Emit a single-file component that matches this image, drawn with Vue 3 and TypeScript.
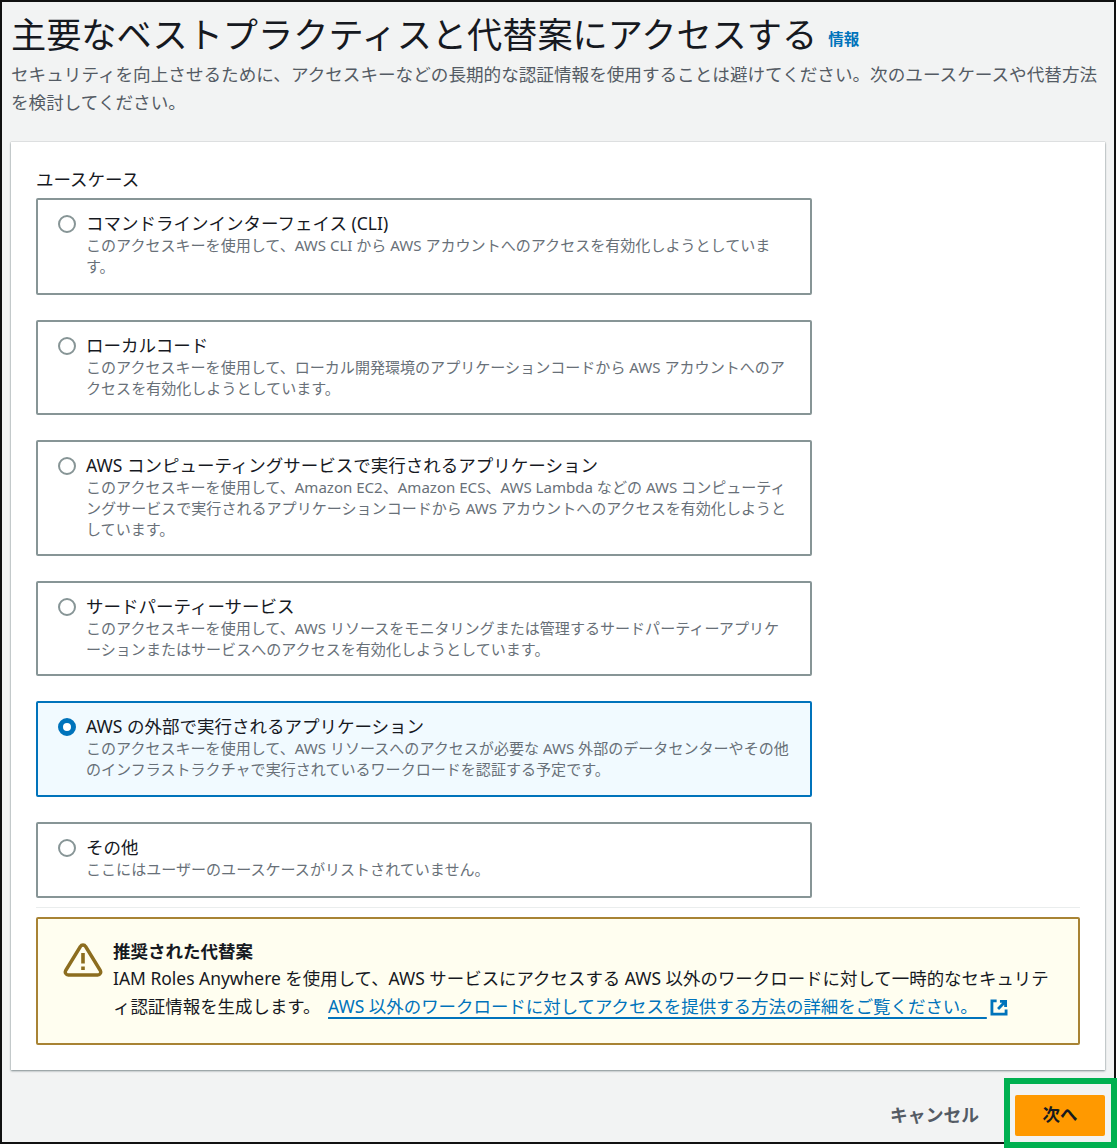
<script setup lang="ts">
interface UseCase {
  title: string
  desc: string
  selected?: boolean
  height: number
}
const useCases: UseCase[] = [
  { title: 'コマンドラインインターフェイス (CLI)', desc: 'このアクセスキーを使用して、AWS CLI から AWS アカウントへのアクセスを有効化しようとしています。', height: 97 },
  { title: 'ローカルコード', desc: 'このアクセスキーを使用して、ローカル開発環境のアプリケーションコードから AWS アカウントへのアクセスを有効化しようとしています。', height: 95 },
  { title: 'AWS コンピューティングサービスで実行されるアプリケーション', desc: 'このアクセスキーを使用して、Amazon EC2、Amazon ECS、AWS Lambda などの AWS コンピューティングサービスで実行されるアプリケーションコードから AWS アカウントへのアクセスを有効化しようとしています。', height: 116 },
  { title: 'サードパーティーサービス', desc: 'このアクセスキーを使用して、AWS リソースをモニタリングまたは管理するサードパーティーアプリケーションまたはサービスへのアクセスを有効化しようとしています。', height: 95 },
  { title: 'AWS の外部で実行されるアプリケーション', desc: 'このアクセスキーを使用して、AWS リソースへのアクセスが必要な AWS 外部のデータセンターやその他のインフラストラクチャで実行されているワークロードを認証する予定です。', selected: true, height: 96 },
  { title: 'その他', desc: 'ここにはユーザーのユースケースがリストされていません。', height: 76 },
]
</script>

<template>
  <div class="frame">
    <div class="page">
      <header class="head">
        <h1 class="title">主要なベストプラクティスと代替案にアクセスする<a class="info">情報</a></h1>
        <p class="lead">セキュリティを向上させるために、アクセスキーなどの長期的な認証情報を使用することは避けてください。次のユースケースや代替方法を検討してください。</p>
      </header>

      <section class="card">
        <div class="label">ユースケース</div>
        <div class="options">
          <div
            v-for="u in useCases"
            :key="u.title"
            class="option"
            :class="{ selected: u.selected }"
            :style="{ height: u.height + 'px' }"
          >
            <span class="radio"></span>
            <div class="option-text">
              <div class="option-title">{{ u.title }}</div>
              <div class="option-desc">{{ u.desc }}</div>
            </div>
          </div>
        </div>
        <div class="divider"></div>
        <div class="alert">
          <svg class="warn" viewBox="0 0 40 36" width="40" height="36" aria-hidden="true">
            <path d="M17.4 5.5 a3 3 0 0 1 5.2 0 L37.3 29.5 a3 3 0 0 1 -2.6 4.5 H5.3 a3 3 0 0 1 -2.6 -4.5 Z" fill="none" stroke="#8c6d1f" stroke-width="3.4" stroke-linejoin="round" />
            <path d="M20 12 V22.5" stroke="#8c6d1f" stroke-width="3.6" fill="none" />
            <path d="M20 25.5 V29" stroke="#8c6d1f" stroke-width="3.6" fill="none" />
          </svg>
          <div class="alert-body">
            <div class="alert-title">推奨された代替案</div>
            <div class="alert-text">IAM Roles Anywhere を使用して、AWS サービスにアクセスする AWS 以外のワークロードに対して一時的なセキュリテ<br />ィ認証情報を生成します。 <a class="link">AWS 以外のワークロードに対してアクセスを提供する方法の詳細をご覧ください。&nbsp;&nbsp;</a><svg class="ext" viewBox="0 0 19 18" width="18" height="17" aria-hidden="true">
                <path d="M7 2 H2 V16 H17 V11" fill="none" stroke="#0073bb" stroke-width="3" />
                <path d="M10.5 2.5 H16.5 V8.5 M16 3 L8.5 10.5" fill="none" stroke="#0073bb" stroke-width="3" />
              </svg></div>
          </div>
        </div>
      </section>

      <footer class="actions">
        <button class="cancel" type="button">キャンセル</button>
        <button class="next" type="button">次へ</button>
      </footer>
    </div>
    <div class="highlight"></div>
  </div>
</template>

<style>
html, body { margin: 0; background: #fff; }
</style>

<style scoped>
* { box-sizing: border-box; }
.frame {
  position: relative;
  width: 1117px;
  height: 1148px;
  font-family: "Noto Sans", "Noto Sans CJK JP", sans-serif;
  color: #16191f;
}
.page {
  width: 1116px;
  height: 1144px;
  border: 2px solid #111;
  background: #f2f3f3;
  padding: 0 9px;
  display: flex;
  flex-direction: column;
}
.head { height: 140px; padding: 10px 0 0; }
.title {
  margin: 0;
  font-size: 35.2px;
  line-height: 44px;
  font-weight: 400;
  white-space: nowrap;
  color: #16191f;
}
.info {
  margin-left: 11px;
  font-size: 15.5px;
  line-height: 1;
  font-weight: 700;
  vertical-align: 3px;
  color: #0073bb;
}
.lead {
  margin: 4px 0 0;
  font-size: 17.6px;
  line-height: 28px;
  color: #545b64;
}
.card {
  width: 1094px;
  height: 928px;
  background: #fff;
  box-shadow: 0 1px 2px rgba(0, 28, 36, .45), 0 0 1px rgba(0, 28, 36, .3);
  padding: 25px 25px 0;
}
.label { font-size: 17.5px; line-height: 25px; height: 31px; color: #16191f; }
.options { display: flex; flex-direction: column; gap: 25px; width: 776px; }
.option {
  display: flex;
  border: 2px solid #879596;
  border-radius: 2px;
  padding: 11px 18px 0 20px;
}
.option.selected { border-color: #0073bb; background: #f1faff; }
.radio {
  flex: none;
  width: 18px;
  height: 18px;
  margin-top: 4px;
  border: 2px solid #879596;
  border-radius: 50%;
  background: #fff;
}
.selected .radio { border: 5.5px solid #0073bb; }
.option-text { margin-left: 10px; }
.option-title { font-size: 17.5px; line-height: 24px; color: #16191f; }
.option-desc { font-size: 15.05px; line-height: 21px; color: #687078; }
.divider { height: 1px; background: #eaeded; margin-top: 9px; }
.alert {
  display: flex;
  height: 128px;
  margin-top: 9px;
  border: 2px solid #a88334;
  border-radius: 2px;
  background: #fffef0;
  padding: 20px 0 0 25px;
}
.warn { flex: none; margin-top: 2px; }
.alert-body { margin-left: 10px; }
.alert-title { font-size: 17.5px; line-height: 25px; font-weight: 700; color: #16191f; }
.alert-text { font-size: 17.45px; line-height: 28px; color: #16191f; white-space: nowrap; }
.link {
  margin-left: 3px;
  color: #0073bb;
  text-decoration: underline;
  text-decoration-thickness: 2px;
  text-underline-offset: 4px;
}
.ext { margin-left: 3px; vertical-align: -3px; }
.actions {
  flex: 1;
  display: flex;
  align-items: flex-start;
  justify-content: flex-end;
  gap: 36px;
  padding: 25px 0 0;
}
.cancel {
  border: 0;
  background: none;
  padding: 0 0 3px;
  height: 40px;
  font: 700 17.8px "Noto Sans", "Noto Sans CJK JP", sans-serif;
  color: #545b64;
}
.next {
  width: 90px;
  height: 41px;
  border: 0;
  border-radius: 2px;
  padding: 0 0 4px;
  background: #ff9900;
  font: 700 17.5px "Noto Sans", "Noto Sans CJK JP", sans-serif;
  color: #16191f;
}
.highlight {
  position: absolute;
  left: 1004px;
  top: 1078px;
  width: 113px;
  height: 70px;
  border: 6px solid #00b050;
}
</style>
